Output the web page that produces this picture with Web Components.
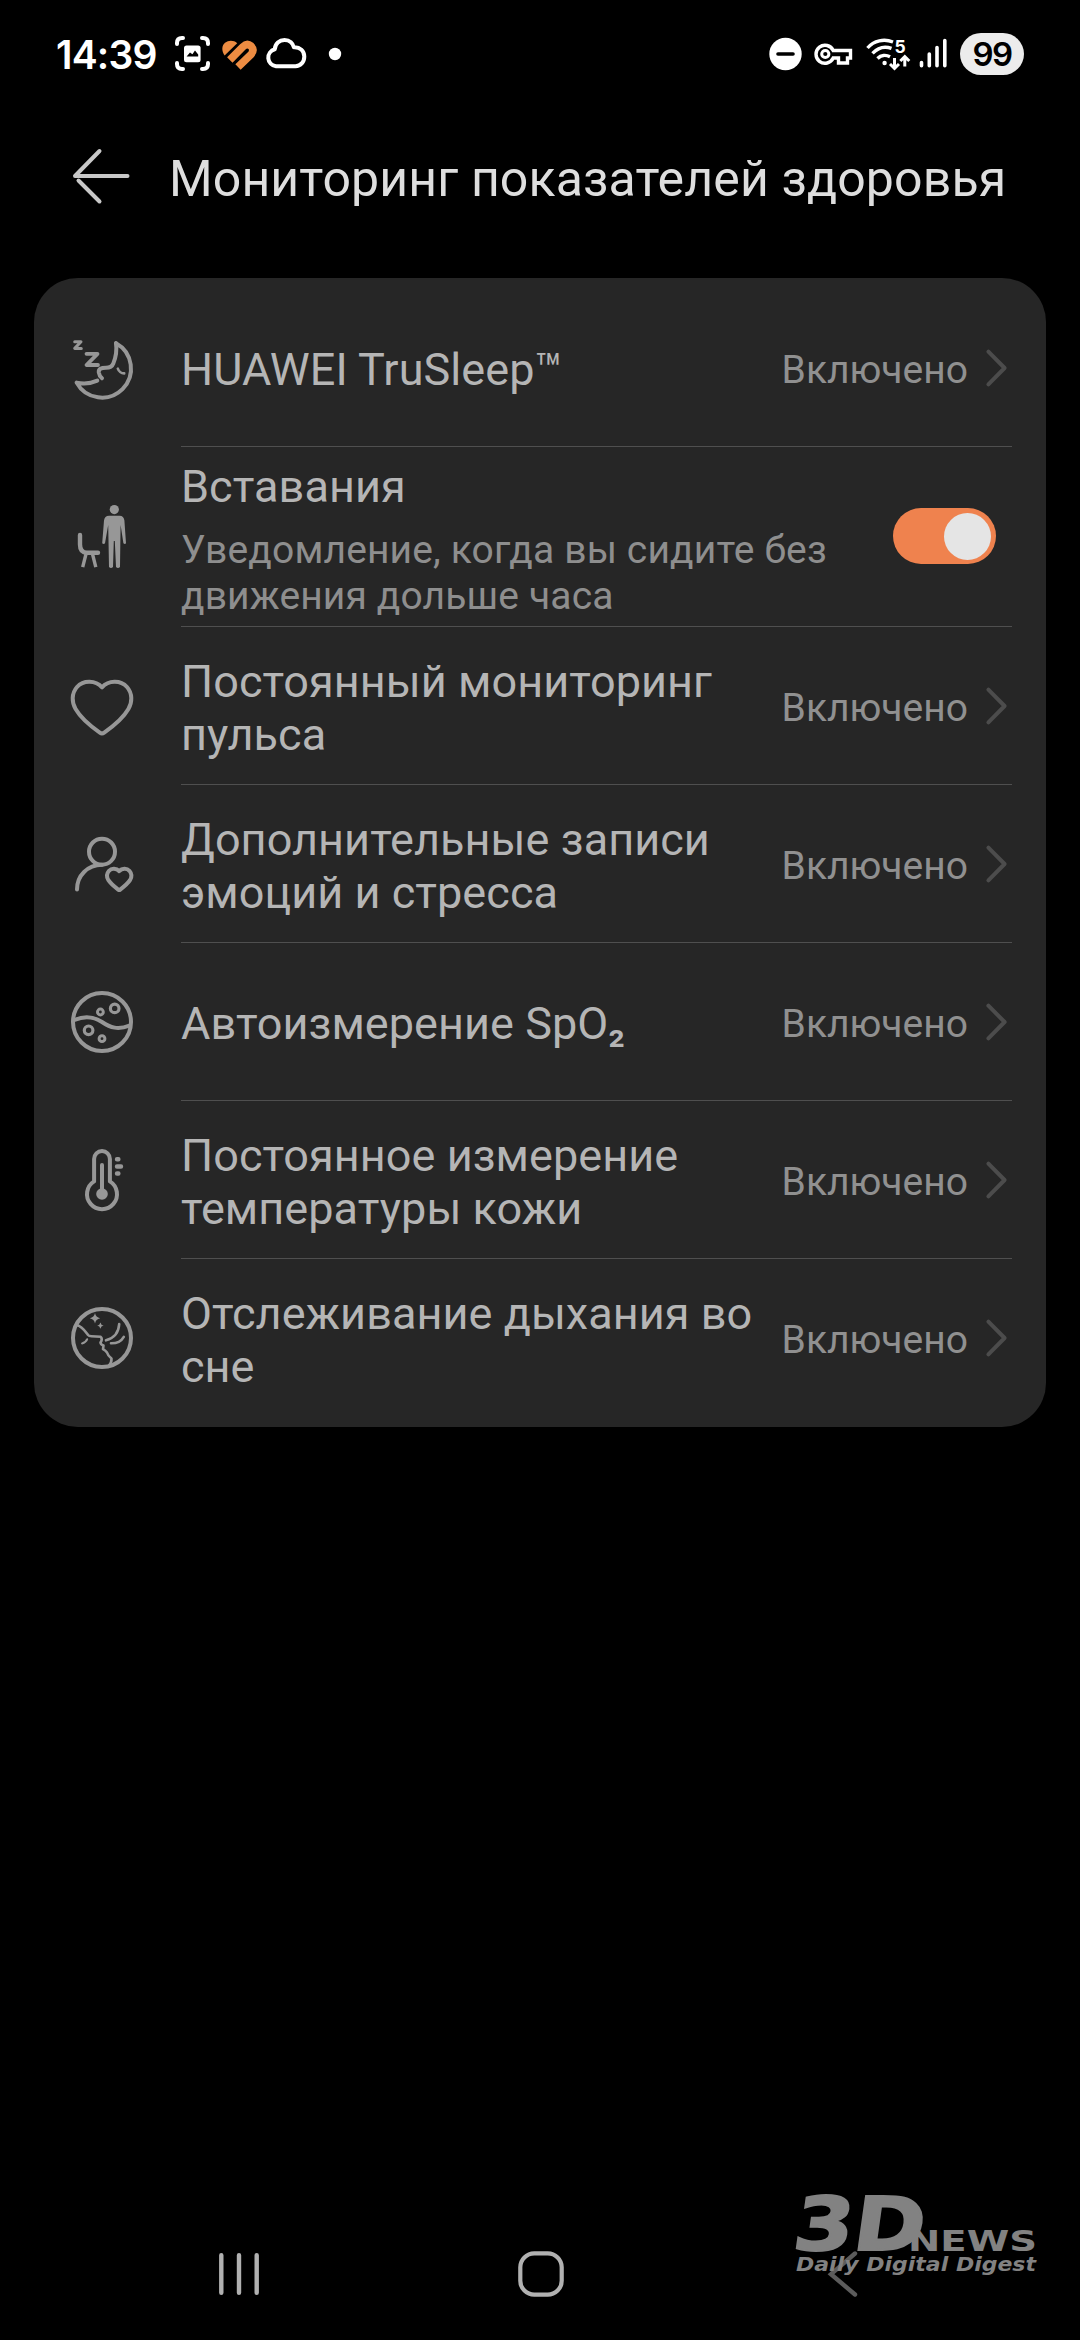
<!DOCTYPE html>
<html lang="ru">
<head>
<meta charset="utf-8">
<title>Мониторинг показателей здоровья</title>
<style>
    html, body {
        margin: 0;
        background: #000;
    }

    body {
        width: 1080px;
        height: 2340px;
        overflow: hidden;
        font-family: Roboto, "Noto Sans", sans-serif;
    }
</style>
</head>
<body>
<health-screen></health-screen>

<script>
"use strict";

const ICONS = {
    sleep: `
        <path d="M56 17.2A29 29 0 1 1 16.6 56.6C23 58 31 57.4 37.3 54.6"/>
        <path d="M56 17.2C57 24 55.5 32 53.3 37.5C52 41 50 41.8 46 41.8C41 41.8 38.4 43 38.8 46.5Q39.3 50 42 52.3"/>
        <path d="M57.8 42.6Q59.5 47.2 64.2 47.4" stroke-width="2.6"/>
        <polyline points="14.7,15.8 21,15.8 14.7,22.4 21.3,22.4" stroke-width="3"/>
        <polyline points="26.5,27.8 37.5,27.8 26.5,39 38,39" stroke-width="3.8"/>`,
    stand: `
        <path d="M20 40V49.5Q20 57.7 27 57.7H38" stroke-width="4.4"/>
        <path d="M26 59L22.7 72.2M32.5 59L35.8 72.2" stroke-width="3.4" stroke-linecap="butt"/>
        <g fill="currentColor" stroke="none">
            <circle cx="54.3" cy="14.6" r="4.6"/>
            <path d="M49 20.8H59.6Q63.8 20.8 64.4 25.5L66 48.3Q65 49.8 63.4 48.3L60.6 30L60 72Q58 74 56 72L54.8 46H53.8L53 72Q51 74 49 72L48.2 30L45 48.3Q43.7 49.8 42.2 48.3L44 25.5Q44.6 20.8 49 20.8Z"/>
        </g>`,
    heart: `<path d="M42 23.3C35.6 16.2 23.6 15.6 17 23C11.2 29.6 11.8 38.6 15.6 45C20.4 53.4 31 62.4 39.8 68.6Q42 70.2 44.2 68.6C53 62.4 63.6 53.4 68.4 45C72.2 38.6 72.8 29.6 67 23C60.4 15.6 48.4 16.2 42 23.3Z"/>`,
    stress: `
        <circle cx="42" cy="29.7" r="13"/>
        <path d="M17 67.5C17 53.5 27.5 43 42 42.8"/>
        <path d="M59.2 49.2C56.4 46.2 51.6 46 49 48.8C46.4 51.8 46.8 55.6 48.4 58.2C50.6 61.6 54.8 65 58.2 67.6Q59.2 68.4 60.2 67.6C63.6 65 67.8 61.6 70 58.2C71.6 55.6 72 51.8 69.4 48.8C66.8 46 62 46.2 59.2 49.2Z"/>`,
    oxygen: `
        <circle cx="42" cy="42" r="29"/>
        <path d="M14.5 40C24 35.8 34 36.8 42 42C50.5 47.8 58 50 69.5 45.6"/>
        <circle cx="54.7" cy="28.4" r="4.3" stroke-width="3.2"/>
        <circle cx="40.4" cy="32" r="2.9" stroke-width="3"/>
        <circle cx="28.6" cy="50.3" r="4.3" stroke-width="3.2"/>
        <circle cx="42" cy="58.7" r="2.9" stroke-width="3"/>`,
    temperature: `
        <path d="M34.1 43.4V21A7.9 7.9 0 0 1 49.9 21V43.4A15 15 0 1 1 34.1 43.4Z"/>
        <path d="M42 27V56"/>
        <circle cx="42" cy="56" r="5.8" fill="currentColor" stroke="none"/>
        <path d="M57 21.3H58.4M57 28.5H61M57 35.5H58.4" stroke-width="4.4"/>`,
    breath: `
        <circle cx="42" cy="42" r="29"/>
        <g stroke-width="2.6">
            <path d="M16.5 29C22 30 25 35 28 39Q29 40.2 31.5 40.3L40.5 40.7Q43 43 40.5 46.5Q40.5 48.5 43.5 49.5L43 53.2Q45.5 54.5 47 56.5Q48 60 51.5 62.5Q51.8 67 48.5 70.5"/>
            <path d="M22 47.4Q26 46.5 27.2 43.2" stroke-width="2"/>
            <path d="M46 44.3Q58.5 41 59.2 28M51 47.3Q60 47.5 63.8 40.8"/>
        </g>
        <g fill="currentColor" stroke="none">
            <path d="M35 17Q35.8 21.4 40.2 22.2Q35.8 23 35 27.4Q34.2 23 29.8 22.2Q34.2 21.4 35 17Z"/>
            <path d="M40.4 26.4Q41 29 43.6 29.6Q41 30.2 40.4 32.8Q39.8 30.2 37.2 29.6Q39.8 29 40.4 26.4Z"/>
        </g>`
};

class StatusBar extends HTMLElement {
    constructor(){
        super();
        this.attachShadow({mode : 'open'});
    }

    getTemplate(){
        const template = document.createElement("template");
        template.innerHTML = `
            <div class="left">
                <span class="time">14:39</span>
                <svg width="186" height="70" viewBox="0 0 186 70" fill="none" stroke="#fff" stroke-width="4" stroke-linecap="round" stroke-linejoin="round">
                    <path d="M7 25V24Q7 19 12 19H13M32 19H33Q38 19 38 24V25M38 44V45Q38 50 33 50H32M13 50H12Q7 50 7 45V44"/>
                    <rect x="14" y="26.6" width="16.6" height="16.6" rx="2.5" fill="#fff" stroke="none"/>
                    <path d="M16.6 37.4L20 33.4L22.4 35.2L25 31.4L28.2 35.4V37.4Z" fill="#000" stroke="none"/>
                    <path d="M67.2 24.2L54.6 36.4C51.4 32 51.6 26.6 55 23.8C58.6 21 63.6 21 67.2 24.2Z" fill="#ed8c42" stroke="none"/>
                    <path d="M59.8 41L72.8 27.8Q77 23.6 81 27Q84.8 31 81 35.4L68 48" stroke="#ed8c42" stroke-width="7.6" stroke-linecap="butt"/>
                    <path d="M106 47.2A8.6 8.6 0 0 1 104.8 30.3C105 24.5 109.5 21 114.5 21C120 21 123 24.5 123.8 28.2C130 27.8 134.3 32 134.3 37.4C134.3 43 130.5 47.2 125.5 47.2Z"/>
                    <circle cx="165" cy="35" r="6.2" fill="#fff" stroke="none"/>
                </svg>
            </div>
            <div class="right">
                <svg width="184" height="70" viewBox="0 0 184 70" fill="none" stroke="#fff" stroke-width="3.6">
                    <circle cx="19.5" cy="35" r="16.2" fill="#fff" stroke="none"/>
                    <path d="M12 35H27" stroke="#000" stroke-linecap="round"/>
                    <path d="M67.2 31.5A9 9 0 1 0 67.2 39H72.5V44H81.5V39H84.5V31.5Z" stroke-width="3.4"/>
                    <circle cx="59.3" cy="35" r="3.6" stroke-width="3"/>
                    <g stroke-linecap="butt" stroke-width="3.4">
                        <path d="M101.5 29C108 21.5 118 19.5 127 23"/>
                        <path d="M106.5 34.3C112 28.5 119 27 125.5 29.4"/>
                        <path d="M111.5 39.5C115 36 120 35.6 124 37.8"/>
                        <circle cx="118.6" cy="44" r="2.2" fill="#fff" stroke="none"/>
                        <path d="M128.5 39V48.5M124 45L128.5 49.4L133 45" stroke-width="3"/>
                        <path d="M138.8 47.5V38M134.3 42L138.8 37.6L143.3 42" stroke-width="3"/>
                    </g>
                    <text x="128.4" y="34" font-family="Inter, sans-serif" font-size="17.5" font-weight="700" fill="#fff" stroke="none">5</text>
                    <path d="M155.5 43.5V46.8M163.3 35V46.8M171 28.5V46.8M178.8 21.5V46.8" stroke-width="3.6" stroke-linecap="round"/>
                </svg>
                <span class="battery">99</span>
            </div>
            ${this.getStyles()}
        `;
        return template;
    }

    getStyles(){
        return `
            <style>
                :host {
                    display: flex;
                    justify-content: space-between;
                    height: 108px;
                    padding: 0 56px;
                    color: #fff;
                    font-family: Inter, "Noto Sans", sans-serif;
                }

                .left, .right {
                    display: flex;
                    align-items: center;
                }

                svg {
                    display: block;
                    flex: none;
                }

                .time {
                    width: 114px;
                    font-size: 39px;
                    font-weight: 600;
                    letter-spacing: -0.8px;
                    white-space: nowrap;
                }

                .right {
                    gap: 10px;
                }

                .battery {
                    width: 64px;
                    height: 42px;
                    border-radius: 21px;
                    background: #ececec;
                    color: #000;
                    font-size: 33px;
                    font-weight: 600;
                    line-height: 42px;
                    text-align: center;
                    letter-spacing: -1.5px;
                }
            </style>
        `;
    }

    connectedCallback(){
        this.shadowRoot.appendChild(this.getTemplate().content.cloneNode(true));
    }
}

customElements.define("status-bar", StatusBar);

class PageHeader extends HTMLElement {
    constructor(){
        super();
        this.attachShadow({mode : 'open'});
    }

    connectedCallback(){
        this.shadowRoot.innerHTML = `
            <style>
                :host {
                    display: flex;
                    align-items: center;
                    gap: 31px;
                    height: 140px;
                    margin-bottom: 30px;
                    padding: 0 66px;
                    color: #dedede;
                }

                svg {
                    flex: none;
                }

                h1 {
                    margin: 0;
                    padding-top: 1px;
                    font-size: 50px;
                    font-weight: 400;
                    letter-spacing: 0.12px;
                    white-space: nowrap;
                }
            </style>
            <svg width="72" height="72" viewBox="0 0 72 72" fill="none" stroke="#c8c8c8" stroke-width="4" stroke-linecap="round" stroke-linejoin="round">
                <path d="M61.5 34H9L33.5 9M12.5 38.5L33.5 59.5"/>
            </svg>
            <h1><slot></slot></h1>
        `;
    }
}

customElements.define("page-header", PageHeader);

class ToggleSwitch extends HTMLElement {
    constructor(){
        super();
        this.attachShadow({mode : 'open'});
    }

    connectedCallback(){
        this.shadowRoot.innerHTML = `
            <style>
                :host {
                    display: flex;
                    justify-content: flex-end;
                    box-sizing: border-box;
                    width: 103px;
                    height: 56px;
                    padding: 4.5px 5px;
                    border-radius: 28px;
                    background: #ef824e;
                }

                span {
                    width: 47px;
                    height: 47px;
                    border-radius: 50%;
                    background: #e5e5e5;
                }
            </style>
            <span></span>
        `;
    }
}

customElements.define("toggle-switch", ToggleSwitch);

class SettingRow extends HTMLElement {
    constructor(){
        super();
        this.attachShadow({mode : 'open'});

        this.icon = this.getAttribute("icon");
        this.value = this.getAttribute("value");
        this.note = this.getAttribute("note");
    }

    getControl(){
        if (this.value === null) {
            return `<toggle-switch></toggle-switch>`;
        }

        return `
            <span class="value">${this.value}</span>
            <svg class="chevron" width="24" height="42" viewBox="0 0 24 42" fill="none" stroke="#4c4c4c" stroke-width="4" stroke-linecap="round" stroke-linejoin="round">
                <path d="M4.4 4.7L20.6 21L4.4 37.3"/>
            </svg>`;
    }

    getTemplate(){
        const template = document.createElement("template");
        template.innerHTML = `
            <svg class="icon" width="84" height="84" viewBox="0 0 84 84" fill="none" stroke="currentColor" stroke-width="4" stroke-linecap="round" stroke-linejoin="round">
                ${ICONS[this.icon]}
            </svg>
            <div class="body">
                <div class="text">
                    <div class="title"><slot></slot></div>
                    ${this.note ? `<div class="note">${this.note}</div>` : ""}
                </div>
                ${this.getControl()}
            </div>
            ${this.getStyles()}
        `;
        return template;
    }

    getStyles(){
        return `
            <style>
                :host {
                    display: flex;
                    align-items: center;
                    height: 158px;
                    padding-left: 26px;
                    padding-right: 34px;
                }

                :host([note]) {
                    height: 180px;
                }

                .icon {
                    flex: none;
                    margin-right: 37px;
                    color: #979797;
                }

                .body {
                    display: flex;
                    flex: 1;
                    align-items: center;
                    box-sizing: border-box;
                    height: 100%;
                    border-bottom: 1px solid #4f4f4f;
                }

                :host(:last-of-type) .body {
                    border-bottom-color: transparent;
                }

                .text {
                    flex: 1;
                    padding: 4px 20px 0 0;
                }

                :host([note]) .text {
                    padding-top: 5px;
                }

                .title {
                    color: #b5b5b5;
                    font-size: 45px;
                    line-height: 53px;
                    letter-spacing: 0.06px;
                }

                .title ::slotted(b) {
                    font-weight: 500;
                }

                .note {
                    margin-top: 14px;
                    color: #8e8e8e;
                    font-size: 39px;
                    line-height: 46px;
                    letter-spacing: 0.14px;
                }

                .value {
                    margin-right: 16px;
                    padding-top: 4px;
                    color: #909090;
                    font-size: 39px;
                }

                .chevron {
                    margin-right: 4px;
                }

                toggle-switch {
                    margin-right: 16px;
                    margin-bottom: 1px;
                }
            </style>
        `;
    }

    connectedCallback(){
        this.shadowRoot.appendChild(this.getTemplate().content.cloneNode(true));
    }
}

customElements.define("setting-row", SettingRow);

class SettingCard extends HTMLElement {
    constructor(){
        super();
        this.attachShadow({mode : 'open'});
    }

    connectedCallback(){
        this.shadowRoot.innerHTML = `
            <style>
                :host {
                    display: flex;
                    flex-direction: column;
                    margin: 0 34px;
                    padding: 11px 0 10px;
                    border-radius: 44px;
                    background: #262626;
                }
            </style>
            <slot></slot>
        `;
    }
}

customElements.define("setting-card", SettingCard);

class NavBar extends HTMLElement {
    constructor(){
        super();
        this.attachShadow({mode : 'open'});
    }

    connectedCallback(){
        this.shadowRoot.innerHTML = `
            <style>
                :host {
                    display: grid;
                    grid-template-columns: repeat(3, 302px);
                    justify-items: center;
                    align-items: center;
                    height: 132px;
                    margin-top: auto;
                    padding-left: 88px;
                }
            </style>
            <svg width="48" height="48" viewBox="0 0 48 48" stroke="#b1b1b1" stroke-width="4.4" stroke-linecap="round">
                <path d="M6.3 5.2V42.8M24 5.2V42.8M41.7 5.2V42.8"/>
            </svg>
            <svg width="48" height="48" viewBox="0 0 48 48" fill="none" stroke="#b1b1b1" stroke-width="4.2">
                <rect x="3.3" y="3.3" width="41.4" height="41.4" rx="14"/>
            </svg>
            <svg width="48" height="48" viewBox="0 0 48 48" fill="none" stroke="#5c5c5c" stroke-width="4.4" stroke-linecap="round">
                <path d="M36 3.5L12 24.2L36 44.5"/>
            </svg>
        `;
    }
}

customElements.define("nav-bar", NavBar);

// Watermark that floats above the navigation bar
class NewsMark extends HTMLElement {
    constructor(){
        super();
        this.attachShadow({mode : 'open'});
    }

    connectedCallback(){
        this.shadowRoot.innerHTML = `
            <style>
                :host {
                    position: absolute;
                    left: 770px;
                    top: 2160px;
                }

                svg {
                    display: block;
                    overflow: visible;
                }
            </style>
            <svg width="290" height="130" viewBox="0 0 290 130" fill="#828282" font-family="'DejaVu Sans', sans-serif" font-weight="700">
                <text transform="translate(21 90) skewX(-8)" font-size="74" textLength="131" lengthAdjust="spacingAndGlyphs" stroke="#828282" stroke-width="2">3D</text>
                <text x="138" y="90.5" font-size="29" textLength="129" lengthAdjust="spacingAndGlyphs">NEWS</text>
                <text x="26" y="110.5" font-size="19" font-style="italic" textLength="240" lengthAdjust="spacingAndGlyphs">Daily Digital Digest</text>
            </svg>
        `;
    }
}

customElements.define("news-mark", NewsMark);

class HealthScreen extends HTMLElement {
    constructor(){
        super();
        this.attachShadow({mode : 'open'});
    }

    connectedCallback(){
        this.shadowRoot.innerHTML = `
            <style>
                :host {
                    display: flex;
                    flex-direction: column;
                    position: relative;
                    width: 1080px;
                    height: 2340px;
                    background: #000;
                }
            </style>
            <status-bar></status-bar>
            <page-header>Мониторинг показателей здоровья</page-header>
            <setting-card>
                <setting-row icon="sleep" value="Включено">HUAWEI TruSleep™</setting-row>
                <setting-row icon="stand" note="Уведомление, когда вы сидите без движения дольше часа">Вставания</setting-row>
                <setting-row icon="heart" value="Включено">Постоянный мониторинг пульса</setting-row>
                <setting-row icon="stress" value="Включено">Дополнительные записи эмоций и стресса</setting-row>
                <setting-row icon="oxygen" value="Включено">Автоизмерение SpO<b>₂</b></setting-row>
                <setting-row icon="temperature" value="Включено">Постоянное измерение температуры кожи</setting-row>
                <setting-row icon="breath" value="Включено">Отслеживание дыхания во сне</setting-row>
            </setting-card>
            <nav-bar></nav-bar>
            <news-mark></news-mark>
        `;
    }
}

customElements.define("health-screen", HealthScreen);
</script>
</body>
</html>
